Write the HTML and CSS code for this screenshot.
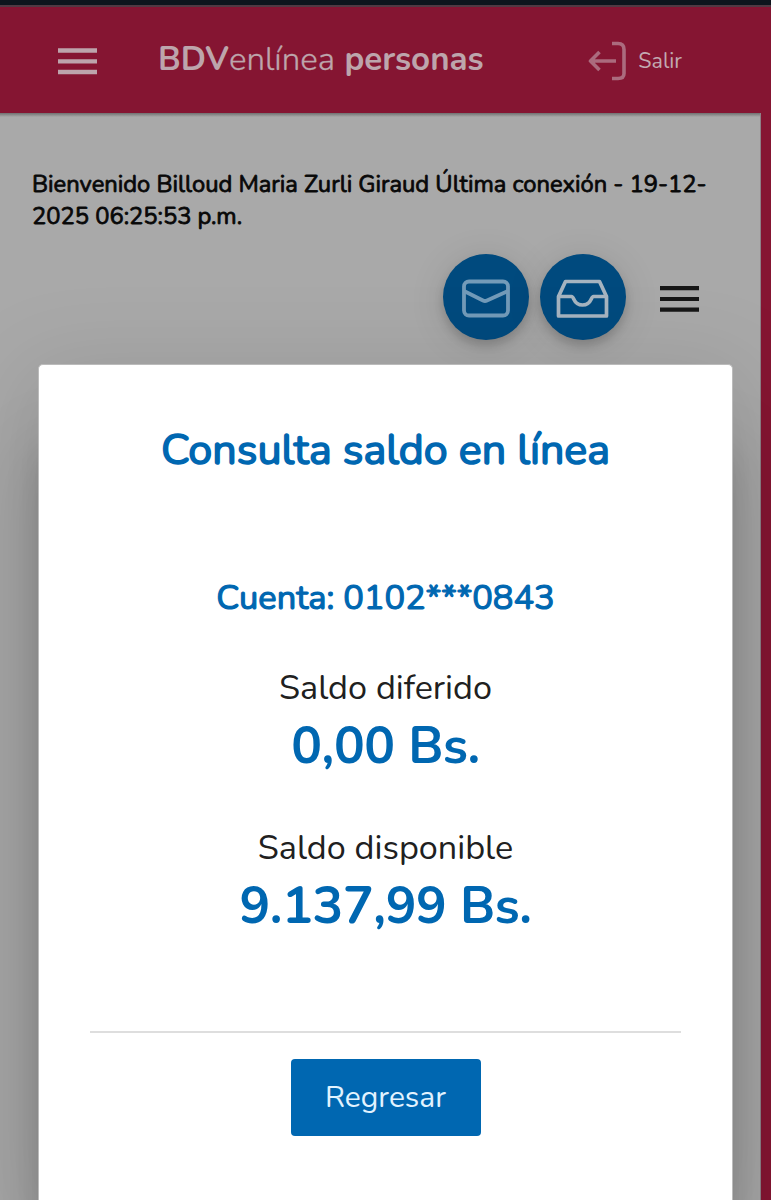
FILE: index.html
```html
<!DOCTYPE html>
<html lang="es">
<head>
<meta charset="utf-8">
<title>BDVenlínea personas</title>
<link rel="stylesheet" href="styles.css">
</head>
<body>
<div class="page">
  <header class="topbar">
    <svg class="menu" width="39" height="27" viewBox="0 0 39 27"><path d="M0 2.500h39M0 13.300h39M0 24h39" stroke="currentColor" stroke-width="4.3"/></svg>
    <div class="brand"><b class="bdv">BDV</b><span class="enlinea">enlínea</span><b class="personas">personas</b></div>
    <div class="logout">
      <svg width="40" height="42" viewBox="0 0 40 42" fill="none" stroke="currentColor" stroke-width="3.6" stroke-linejoin="round"><path d="M25 3.500h6q6 0 6 6v24q0 5-6 5h-6M29 21H3M12.500 12l-9 9 9 9"/></svg>
      <span>Salir</span>
    </div>
  </header>
  <main class="content">
    <p class="welcome">Bienvenido Billoud Maria Zurli Giraud Última conexión - 19-12-<br>2025 06:25:53 p.m.</p>
    <div class="actions">
      <div class="round"><svg class="mail" width="50" height="42" viewBox="0 0 50 42" fill="none" stroke="currentColor" stroke-width="3.8" stroke-linejoin="round"><rect x="3" y="3.500" width="44" height="34" rx="5"/><path d="M3 13l19 9.500q2 1 4 0L47 13"/></svg></div>
      <div class="round"><svg class="inbox" width="53" height="42" viewBox="0 0 53 42" fill="none" stroke="currentColor" stroke-width="3.7" stroke-linejoin="round"><path d="M2.500 18.500L9.500 3.500H43.500L50.500 18.500V38H2.500ZM2.500 18.500H15.500C18.500 18.500 17 27 26.500 27S34.500 18.500 37.500 18.500H50.500"/></svg></div>
      <svg class="burger" width="39" height="27" viewBox="0 0 39 27"><path d="M0 2.200h39M0 13h39M0 23.700h39" stroke="currentColor" stroke-width="4.200"/></svg>
    </div>
  </main>
</div>
<section class="dialog">
  <h1 class="title">Consulta saldo en línea</h1>
  <div class="account">Cuenta: 0102***0843</div>
  <div class="label">Saldo diferido</div>
  <div class="amount">0,00 Bs.</div>
  <div class="label disponible">Saldo disponible</div>
  <div class="amount">9.137,99 Bs.</div>
  <hr class="rule">
  <button class="back">Regresar</button>
</section>
</body>
</html>
```
FILE: styles.css
```css
* { box-sizing: border-box; }
body {
  margin: 0;
  width: 771px;
  height: 1200px;
  overflow: hidden;
  position: relative;
  background: #851532;
  font-family: Nunito, Lato, sans-serif;
}
.page {
  height: 1200px;
  border-top: 5px solid #0e151d;
  display: flex;
  flex-direction: column;
}
.topbar {
  height: 108px;
  flex: none;
  border-top: 2px solid #513943;
  background: #851532;
  display: flex;
  align-items: center;
  padding: 0 89px 0 58px;
}
.menu {
  margin-top: 2px;
  color: #bda4ac;
}
.brand {
  margin: -1px 0 0 61px;
  display: flex;
  font-size: 33.100px;
  line-height: 40px;
  color: #bda5ac;
  white-space: nowrap;
}
.enlinea {
  font-weight: 300;
  -webkit-text-stroke: .3px #bda5ac;
}
.personas { margin-left: 9.500px; }
.logout {
  margin: 2px 0 0 auto;
  display: flex;
  align-items: center;
  gap: 11px;
  font-size: 21.500px;
  color: #c2a9b0;
}
.logout svg {
  color: #ab6b7e;
  filter: blur(.4px);
}
.content {
  width: 761px;
  flex: 1;
  border-right: 1px solid #8d8086;
  background: #a9a9a9 linear-gradient(#707070, #a9a9a9) 0 0 / 100% 4px no-repeat;
  padding: 55px 32px 0;
}
.welcome {
  margin: 0;
  font-size: 23.750px;
  line-height: 32px;
  color: #080808;
  -webkit-text-stroke: .8px #080808;
  white-space: nowrap;
}
.actions {
  margin-top: 22px;
  padding-left: 411px;
  display: flex;
  align-items: center;
  gap: 11px;
}
.round {
  width: 86px;
  height: 86px;
  border-radius: 50%;
  background: #004a7e;
  color: #a6b4c0;
  display: flex;
  align-items: center;
  justify-content: center;
  box-shadow: 0 6px 10px rgba(0,0,0,.16), 0 4px 36px rgba(0,0,0,.12);
}
.round svg { margin-top: 3px; }
.round .inbox { margin-right: 2px; }
.mail {
  color: #739bb9;
  filter: blur(.6px);
}
.burger {
  margin: 4px 0 0 22.500px;
  color: #171717;
}
.dialog {
  position: absolute;
  left: 38px;
  top: 364px;
  width: 695px;
  height: 836px;
  border: 1px solid #bbb;
  border-bottom: 0;
  border-radius: 5px 5px 0 0;
  background: #fff;
  box-shadow: 0 80px 32px -14px rgba(0,0,0,.2), 0 90px 76px 6px rgba(0,0,0,.14), 0 18px 92px 16px rgba(0,0,0,.1);
  display: flex;
  flex-direction: column;
  align-items: center;
  color: #0067b1;
  padding: 55px 51px 0;
  white-space: nowrap;
}
.title {
  margin: 0;
  font-size: 43px;
  line-height: 60px;
  font-weight: 400;
  -webkit-text-stroke: 1.600px #0067b1;
}
.account {
  margin-top: 88px;
  font-size: 34.400px;
  line-height: 60px;
  -webkit-text-stroke: 1.200px #0067b1;
}
.label {
  margin-top: 40px;
  font-size: 34.200px;
  line-height: 40px;
  color: #202020;
}
.amount {
  margin-top: 4px;
  font-size: 51.300px;
  letter-spacing: -.4px;
  line-height: 68px;
  font-weight: 700;
}
.disponible { margin-top: 48px; }
.rule {
  width: 591px;
  height: 2px;
  flex: none;
  margin: 91px 0 26px;
  border: 0;
  background: #dedede;
}
.back {
  width: 190px;
  height: 77px;
  flex: none;
  border: 0;
  border-radius: 4px;
  background: #0067b1;
  color: #e2f3ff;
  font: 30px Nunito, Lato, sans-serif;
}
```
